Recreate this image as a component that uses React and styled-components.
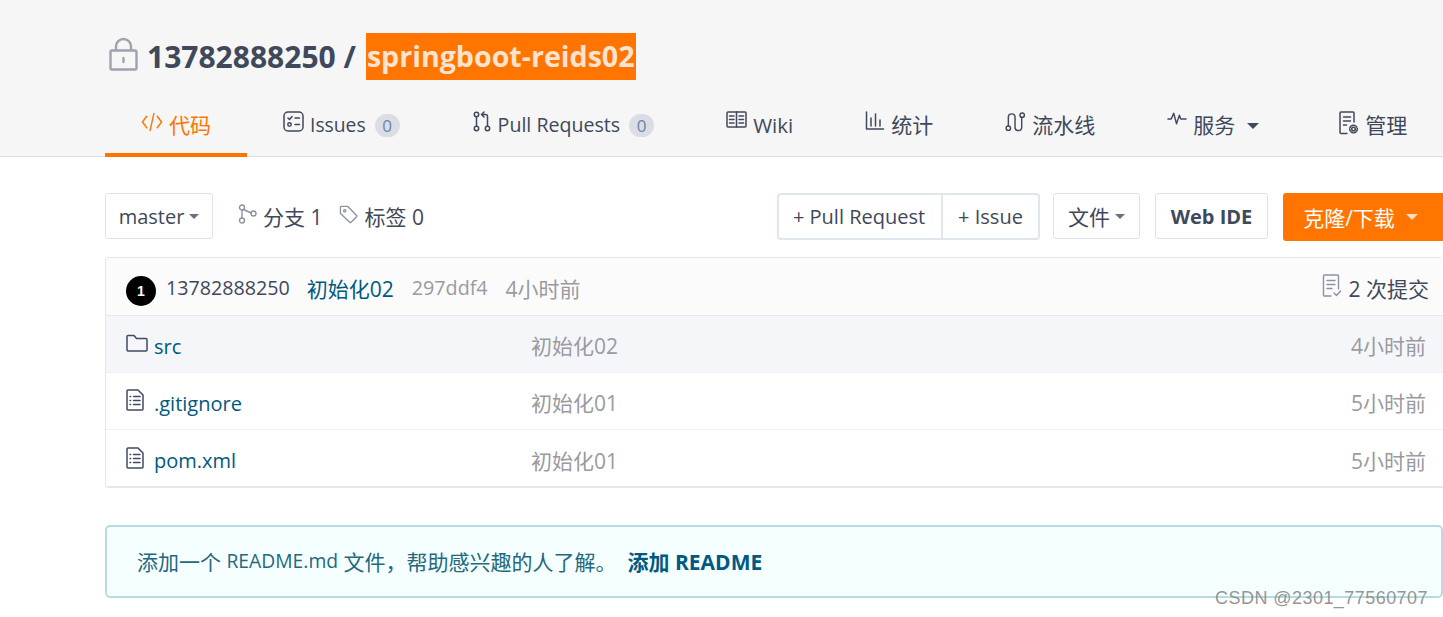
import React from "react";
import styled, { createGlobalStyle } from "styled-components";

const FONT = `"Open Sans", "Noto Sans CJK SC", sans-serif`;

const GlobalStyle = createGlobalStyle`
    html, body {
        margin: 0;
        padding: 0;
        background: #fff;
        overflow: hidden;
    }
    body {
        font-family: ${FONT};
        font-size: 20px;
        color: #40485b;
    }
    * {
        box-sizing: border-box;
    }
`;

const Svg = ({ size = 22, w, h, vb = "0 0 24 24", color = "currentColor", sw = 1.6, children }) => (
    <svg
        width={w || size}
        height={h || size}
        viewBox={vb}
        fill="none"
        stroke={color}
        strokeWidth={sw}
        strokeLinecap="round"
        strokeLinejoin="round"
        style={{ flex: "none", display: "block" }}
    >
        {children}
    </svg>
);

const LockIcon = () => (
    <Svg w={32} h={35} vb="0 0 32 35" color="#9ea3b0" sw={2.4}>
        <rect x="2.5" y="13.5" width="26" height="19" rx="1.5" />
        <path d="M8 13V9.5a7.5 7.5 0 0 1 15 0V13" />
        <path d="M15.5 21v4" />
    </Svg>
);
const CodeIcon = () => (
    <Svg w={22} h={22} vb="0 0 23 22" sw={1.5}>
        <path d="M6 5 1.500 11 6 17M17 5l4.500 6L17 17M13.500 2 9.500 20" />
    </Svg>
);
const IssuesIcon = () => (
    <Svg w={21} h={21} vb="0 0 21 21" sw={1.5}>
        <rect x="1" y="1" width="19" height="19" rx="4" />
        <path d="m5 7 1.500 1.500L9 5.500M12 7h4.500M12 13.500h4.500" />
        <circle cx="6.500" cy="13.500" r="1.700" />
    </Svg>
);
const PullIcon = () => (
    <Svg w={20} h={21} vb="-1 0 20 21" sw={1.5}>
        <circle cx="3.500" cy="3.500" r="2.200" />
        <circle cx="3.500" cy="17.500" r="2.200" />
        <circle cx="14.500" cy="17.500" r="2.200" />
        <path d="M3.500 6v9M14.500 15V5.500a2 2 0 0 0-2-2H9M11 1 8.500 3.500 11 6" />
    </Svg>
);
const WikiIcon = () => (
    <Svg w={21} h={17} vb="0 0 21 17" sw={1.5}>
        <rect x="1" y="1" width="19" height="15" rx="1" />
        <path d="M10.500 1v15M3.500 5H8M3.500 8.500H8M3.500 12H8M13 5h4.500M13 8.500h4.500M13 12h4.500" />
    </Svg>
);
const StatsIcon = () => (
    <Svg w={20} h={20} vb="0 0 20 20" sw={1.5}>
        <path d="M1.500 1v17h17M6 7v8M10.500 3v12M15 9v6" />
    </Svg>
);
const PipelineIcon = () => (
    <Svg w={21} h={22} vb="0 0 22 22" sw={1.5}>
        <circle cx="3.500" cy="17.500" r="2.300" />
        <circle cx="18" cy="3.800" r="2.300" />
        <path d="M3.500 15V6a3.500 3.500 0 0 1 7 0v10.500a3.500 3.500 0 0 0 7 0V6.500" />
    </Svg>
);
const PulseIcon = () => (
    <Svg w={20} h={14} vb="0 0 21 14" sw={1.5}>
        <path d="M1 8h3.500L7 2l3 11 3-9 1.500 4H20" />
    </Svg>
);
const ManageIcon = () => (
    <Svg w={20} h={24} vb="0 0 20 24" sw={1.5}>
        <path d="M8 22.500H2a1 1 0 0 1-1-1V2a1 1 0 0 1 1-1h12a1 1 0 0 1 1 1v9" />
        <path d="M4.500 6h7M4.500 10h7M4.500 14h3" />
        <circle cx="14.500" cy="18" r="1.800" />
        <circle cx="14.500" cy="18" r="3.800" strokeDasharray="2 1.200" />
    </Svg>
);
const BranchIcon = () => (
    <Svg w={19} h={20} vb="0 0 19 20" color="#8c92a4" sw={1.4}>
        <circle cx="4" cy="3.500" r="2.500" />
        <circle cx="4" cy="16.500" r="2.500" />
        <circle cx="15.500" cy="9.500" r="2.500" />
        <path d="M4 6v8M5.500 5.500 13 9" />
    </Svg>
);
const TagIcon = () => (
    <Svg w={19} h={19} vb="0 0 20 20" color="#8c92a4" sw={1.4}>
        <path d="M1.500 2.500a1 1 0 0 1 1-1h6.800L18.500 11a1 1 0 0 1 0 1.400l-5.800 5.800a1 1 0 0 1-1.400 0L1.500 9z" />
        <circle cx="6" cy="6" r="1.200" />
    </Svg>
);
const CommitsIcon = () => (
    <Svg w={20} h={24} vb="0 0 20 24" color="#8c92a4" sw={1.4}>
        <path d="M9 22H2.500a1 1 0 0 1-1-1V2a1 1 0 0 1 1-1h13a1 1 0 0 1 1 1v13" />
        <path d="M5 6.500h8M5 10.500h8M5 14.500h5M12 19l2.500 2.500L18.500 17" />
    </Svg>
);
const FolderIcon = () => (
    <Svg w={22} h={18} vb="0 0 22 18" color="#3f4a63" sw={1.5}>
        <path d="M1 2.500a1 1 0 0 1 1-1h6l2.500 3H20a1 1 0 0 1 1 1V16a1 1 0 0 1-1 1H2a1 1 0 0 1-1-1z" />
    </Svg>
);
const FileIcon = () => (
    <Svg w={18} h={22} vb="0 0 18 22" color="#3f4a63" sw={1.5}>
        <path d="M2 1h10l5 5v14a1 1 0 0 1-1 1H2a1 1 0 0 1-1-1V2a1 1 0 0 1 1-1z" />
        <path d="M7.500 7.500H14M7.500 11.500H14M7.500 15.500H14M4 7.500h.6M4 11.500h.6M4 15.500h.6" />
    </Svg>
);

const Header = styled.header`
    background: #f6f6f6;
    border-bottom: 1px solid #e0e0e0;
    height: 157px;
    padding: 33px 0 0 105px;
`;

const Title = styled.h1`
    margin: 0 0 17px 3px;
    height: 47px;
    display: flex;
    align-items: center;
    gap: 7px;
    font-size: 30px;
    font-weight: 700;
    color: #40485b;
    svg {
        margin-top: -4px;
    }
`;

const Selected = styled.span`
    display: inline-block;
    height: 47px;
    line-height: 46px;
    padding: 0 1px;
    margin-left: 3px;
    background: #ff7500;
    color: #ffe3cf;
    font-size: 28.6px;
`;

const Tabs = styled.nav`
    display: flex;
    height: 60px;
`;

const Tab = styled.a`
    display: flex;
    flex: none;
    align-items: flex-start;
    gap: 6px;
    height: 60px;
    padding: 12px 36px 0;
    font-size: ${(p) => p.$size || 21}px;
    line-height: 32px;
    white-space: nowrap;
    color: ${(p) => (p.$active ? "#ff7500" : "#40485b")};
    border-bottom: 4px solid ${(p) => (p.$active ? "#ff7500" : "transparent")};
    svg {
        margin-top: 2px;
    }
`;

const Count = styled.span`
    width: 25px;
    height: 23px;
    margin: 5px 0 0 3px;
    border-radius: 12px;
    background: #dadde3;
    color: #6c84ae;
    font-size: 17px;
    line-height: 23px;
    text-align: center;
`;

const Caret = styled.i`
    display: inline-block;
    width: 0;
    height: 0;
    border-left: ${(p) => p.$size || 5}px solid transparent;
    border-right: ${(p) => p.$size || 5}px solid transparent;
    border-top: ${(p) => p.$size || 5}px solid ${(p) => p.$color || "#6b7080"};
`;

const TabCaret = styled(Caret)`
    margin: 14px 8px 0 6px;
`;

const Main = styled.main`
    padding: 36px 0 0 105px;
`;

const Toolbar = styled.div`
    display: flex;
    align-items: flex-start;
    height: 46px;
    margin-bottom: 18px;
`;

const Button = styled.button`
    display: flex;
    align-items: center;
    justify-content: center;
    gap: 5px;
    height: 46px;
    width: ${(p) => p.$w}px;
    margin-left: ${(p) => p.$ml || 0}px;
    padding: 0;
    background: #fff;
    border: 1px solid #dde3ea;
    border-radius: 3px;
    font-family: ${FONT};
    font-size: ${(p) => p.$size || 20}px;
    font-weight: ${(p) => (p.$bold ? 700 : 400)};
    color: #40485b;
`;

const CloneButton = styled(Button)`
    height: 48px;
    padding-right: 5px;
    background: #ff7500;
    border: 0;
    border-radius: 3px 0 0 3px;
    color: #fff;
    gap: 11px;
`;

const Stat = styled.span`
    display: flex;
    align-items: center;
    gap: 6px;
    height: 46px;
    margin-left: ${(p) => p.$ml}px;
    font-size: 21px;
    svg {
        margin-top: -4px;
    }
`;

const Spacer = styled.div`
    flex: 1;
`;

const ButtonGroup = styled.div`
    display: flex;
    height: 47px;
    border: 2px solid #dfe6ed;
    border-radius: 4px;
    margin-right: 13px;
`;

const GroupItem = styled.span`
    display: flex;
    align-items: center;
    justify-content: center;
    width: ${(p) => p.$w}px;
    padding-right: ${(p) => p.$pr || 0}px;
    font-size: 20px;
    & + & {
        border-left: 2px solid #dfe6ed;
    }
`;

const Table = styled.section`
    height: 231px;
    border: 1px solid #e4e7ec;
    border-right: 0;
    border-bottom-width: 2px;
    border-radius: 4px 4px 0 4px;
    overflow: hidden;
`;

const CommitBar = styled.div`
    display: flex;
    align-items: center;
    height: 58px;
    padding: 2px 14px 0 20px;
    background: #fbfbfb;
    border-bottom: 1px solid #e6e8ec;
`;

const Avatar = styled.span`
    width: 30px;
    height: 30px;
    margin: 6px 10px 0 0;
    border-radius: 50%;
    background: #000;
    color: #fff;
    font-family: "Liberation Sans", sans-serif;
    font-size: 14px;
    font-weight: 700;
    line-height: 30px;
    text-align: center;
`;

const CommitText = styled.span`
    margin-right: ${(p) => p.$mr || 0}px;
    font-size: ${(p) => p.$size || 19.7}px;
    color: ${(p) => p.$color || "#40485b"};
`;

const CommitCount = styled.span`
    display: flex;
    align-items: center;
    gap: 7px;
    font-size: 21px;
    margin-left: auto;
    svg {
        margin-top: -3px;
    }
`;

const Row = styled.div`
    display: grid;
    grid-template-columns: 21px 384px 1fr auto;
    align-items: center;
    height: 57px;
    padding: 4px 17px 0 20px;
    background: ${(p) => (p.$hover ? "#f5f6fa" : "#fff")};
    border-bottom: ${(p) => (p.$last ? 0 : "1px solid #eef0f3")};
`;

const RowIcon = styled.span`
    margin-top: -6px;
`;

const FileName = styled.a`
    padding-left: 7px;
    color: #005980;
    font-size: 20px;
`;

const Muted = styled.span`
    padding-bottom: 2px;
    color: #9a9a9f;
    font-size: 21px;
`;

const Notice = styled.div`
    display: flex;
    align-items: center;
    height: 73px;
    margin: 37px 0 0;
    padding: 0 30px 2px;
    background: #f6ffff;
    border: 2px solid #b6dbe4;
    border-radius: 5px;
    color: #22697f;
    font-size: 21px;
    white-space: pre;
`;

const NoticeLatin = styled.span`
    font-size: 19.3px;
`;

const NoticeLink = styled.a`
    margin-left: 11px;
    font-weight: 700;
    color: #005980;
`;

const Watermark = styled.div`
    position: absolute;
    right: 15px;
    top: 587px;
    font-family: "Liberation Sans", sans-serif;
    font-size: 18px;
    line-height: 22px;
    letter-spacing: 0.45px;
    color: rgba(130, 130, 130, 0.85);
`;

const files = [
    { name: "src", folder: true, msg: "初始化02", time: "4小时前", hover: true },
    { name: ".gitignore", msg: "初始化01", time: "5小时前" },
    { name: "pom.xml", msg: "初始化01", time: "5小时前", last: true },
];

export default function App() {
    return (
        <>
            <GlobalStyle />
            <Header>
                <Title>
                    <LockIcon />
                    <span>13782888250 /</span>
                    <Selected>springboot-reids02</Selected>
                </Title>
                <Tabs>
                    <Tab $active>
                        <CodeIcon />
                        代码
                    </Tab>
                    <Tab $size={19.3}>
                        <IssuesIcon />
                        Issues
                        <Count>0</Count>
                    </Tab>
                    <Tab $size={19.6}>
                        <PullIcon />
                        Pull Requests
                        <Count>0</Count>
                    </Tab>
                    <Tab $size={20.5}>
                        <WikiIcon />
                        Wiki
                    </Tab>
                    <Tab>
                        <StatsIcon />
                        统计
                    </Tab>
                    <Tab>
                        <PipelineIcon />
                        流水线
                    </Tab>
                    <Tab>
                        <PulseIcon />
                        服务
                        <TabCaret $size={6} $color="#40485b" />
                    </Tab>
                    <Tab>
                        <ManageIcon />
                        管理
                    </Tab>
                </Tabs>
            </Header>
            <Main>
                <Toolbar>
                    <Button $w={108}>
                        master <Caret />
                    </Button>
                    <Stat $ml={25}>
                        <BranchIcon />
                        分支 1
                    </Stat>
                    <Stat $ml={17}>
                        <TagIcon />
                        标签 0
                    </Stat>
                    <Spacer />
                    <ButtonGroup>
                        <GroupItem $w={162} $pr={2}>+ Pull Request</GroupItem>
                        <GroupItem $w={97}>+ Issue</GroupItem>
                    </ButtonGroup>
                    <Button $w={87} $size={21}>
                        文件 <Caret />
                    </Button>
                    <Button $w={113} $ml={15} $bold>
                        Web IDE
                    </Button>
                    <CloneButton $w={160} $ml={15} $size={21}>
                        克隆/下载 <Caret $size={6} $color="#ffdcc0" />
                    </CloneButton>
                </Toolbar>
                <Table>
                    <CommitBar>
                        <Avatar>1</Avatar>
                        <CommitText $mr={17}>13782888250</CommitText>
                        <CommitText $mr={18} $size={21} $color="#005980">初始化02</CommitText>
                        <CommitText $mr={18} $color="#9a9aa2">297ddf4</CommitText>
                        <CommitText $size={21} $color="#9a9aa2">4小时前</CommitText>
                        <CommitCount>
                            <CommitsIcon />2 次提交
                        </CommitCount>
                    </CommitBar>
                    {files.map((f) => (
                        <Row key={f.name} $hover={f.hover} $last={f.last}>
                            <RowIcon>{f.folder ? <FolderIcon /> : <FileIcon />}</RowIcon>
                            <FileName>{f.name}</FileName>
                            <Muted>{f.msg}</Muted>
                            <Muted>{f.time}</Muted>
                        </Row>
                    ))}
                </Table>
                <Notice>
                    添加一个 <NoticeLatin>README.md</NoticeLatin> 文件，帮助感兴趣的人了解。
                    <NoticeLink>添加 README</NoticeLink>
                </Notice>
            </Main>
            <Watermark>CSDN @2301_77560707</Watermark>
        </>
    );
}
